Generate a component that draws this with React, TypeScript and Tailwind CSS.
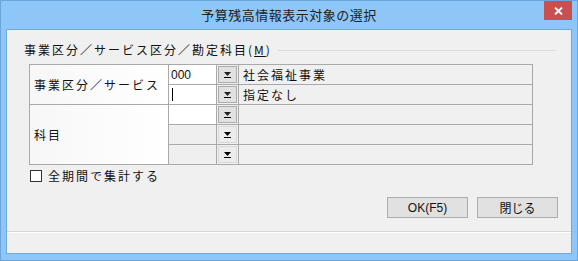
const jp = "font-['MS_UI_Gothic','Noto_Sans_CJK_JP',sans-serif]";

function DropGlyph({ dim }: { dim?: boolean }) {
  return (
    <svg width="9" height="8" viewBox="0 0 9 8">
      <path d="M1 1h7L4.5 5z" fill={dim ? "#000" : "#222"} />
      <rect x="1" y="6" width="7" height="1" fill="#000" />
    </svg>
  );
}

function DropButton({ enabled }: { enabled: boolean }) {
  return (
    <div className="flex items-center justify-center bg-[#f0f0f0] p-px">
      <div
        className={
          enabled
            ? "flex h-[17px] w-[20px] items-center justify-center border border-[#adadad] bg-[#e1e1e1]"
            : "flex h-[17px] w-[20px] items-center justify-center border border-[#d9d9d9] bg-[#ececec]"
        }
      >
        <DropGlyph dim={!enabled} />
      </div>
    </div>
  );
}

const rows = [
  { code: "000", name: "社会福祉事業", enabled: true, cursor: false },
  { code: "", name: "指定なし", enabled: true, cursor: true },
  { code: "", name: "", enabled: true, cursor: false },
  { code: "", name: "", enabled: false, cursor: false },
  { code: "", name: "", enabled: false, cursor: false },
];

export default function App() {
  return (
    <div className={`flex h-[261px] w-[578px] flex-col border border-[#6aa6dc] bg-[#8dc6f7] ${jp}`}>
      {/* title bar */}
      <div className="relative flex h-[28px] shrink-0 items-center justify-center">
        <span className="text-[13px] tracking-[0.5px] text-[#222]">予算残高情報表示対象の選択</span>
        <div className="absolute right-[5px] top-0 flex h-[19px] w-[28px] items-center justify-center bg-[#c75050]">
          <svg width="9" height="8" viewBox="0 0 9 8">
            <path d="M1 0.5l7 7M8 0.5l-7 7" stroke="#fff" strokeWidth="1.8" />
          </svg>
        </div>
      </div>

      {/* client area */}
      <div className="mx-[5px] mb-[6px] flex flex-1 flex-col border border-[#72a9da] bg-[#f0f0f0] text-[12px] tracking-[2px] text-[#111]">
        {/* group header */}
        <div className="ml-[17px] mr-[15px] mt-[13px] flex h-[14px] items-center gap-[6px]">
          <span className="whitespace-nowrap leading-[14px]">
            事業区分／サービス区分／勘定科目(<span className="underline">M</span>)
          </span>
          <div className="h-px flex-1 bg-[#dcdcdc]" />
        </div>

        {/* table */}
        <div className="ml-[22px] mt-[7px] grid w-[504px] grid-cols-[138px_47px_21px_1fr] grid-rows-[19px_19px_19px_19px_19px] gap-px border border-[#a9a9a9] bg-[#a9a9a9]">
          <div className="row-span-2 flex items-center bg-gradient-to-r from-[#f7f7f7] to-white pl-[4px]">
            事業区分／サービス
          </div>
          {rows.slice(0, 2).map((r, i) => (
            <Row key={i} {...r} />
          ))}
          <div className="col-start-1 row-span-3 row-start-3 flex items-center bg-gradient-to-r from-[#f7f7f7] to-white pl-[4px]">
            科目
          </div>
          {rows.slice(2).map((r, i) => (
            <Row key={i + 2} {...r} />
          ))}
        </div>

        {/* checkbox */}
        <label className="ml-[23px] mt-[3px] flex items-center gap-[6px]">
          <span className="h-[12px] w-[12px] border border-[#333] bg-white" />
          <span className="leading-[16px]">全期間で集計する</span>
        </label>

        {/* buttons */}
        <div className="mr-[13px] mt-[13px] flex justify-end gap-[9px]">
          <button className="h-[21px] w-[81px] border border-[#adadad] bg-[#e1e1e1] font-['Liberation_Sans','Noto_Sans_CJK_JP',sans-serif] text-[12px] tracking-normal">
            OK(F5)
          </button>
          <button className="h-[21px] w-[81px] border border-[#adadad] bg-[#e1e1e1] text-[12px] tracking-normal">
            閉じる
          </button>
        </div>

        <div className="mt-[13px] h-px bg-[#d7d7d7]" />
        <div className="h-px bg-white" />
      </div>
    </div>
  );
}

function Row({ code, name, enabled, cursor }: { code: string; name: string; enabled: boolean; cursor: boolean }) {
  return (
    <>
      <div
        className={
          enabled
            ? "flex items-center bg-white pl-[2px] font-['Liberation_Sans',sans-serif] text-[12px] tracking-normal"
            : "bg-[#efefef]"
        }
      >
        {code}
        {cursor && <span className="ml-px h-[13px] w-px bg-black" />}
      </div>
      <DropButton enabled={enabled} />
      <div className="flex items-center bg-[#f0f0f0] pl-[4px]">{name}</div>
    </>
  );
}
